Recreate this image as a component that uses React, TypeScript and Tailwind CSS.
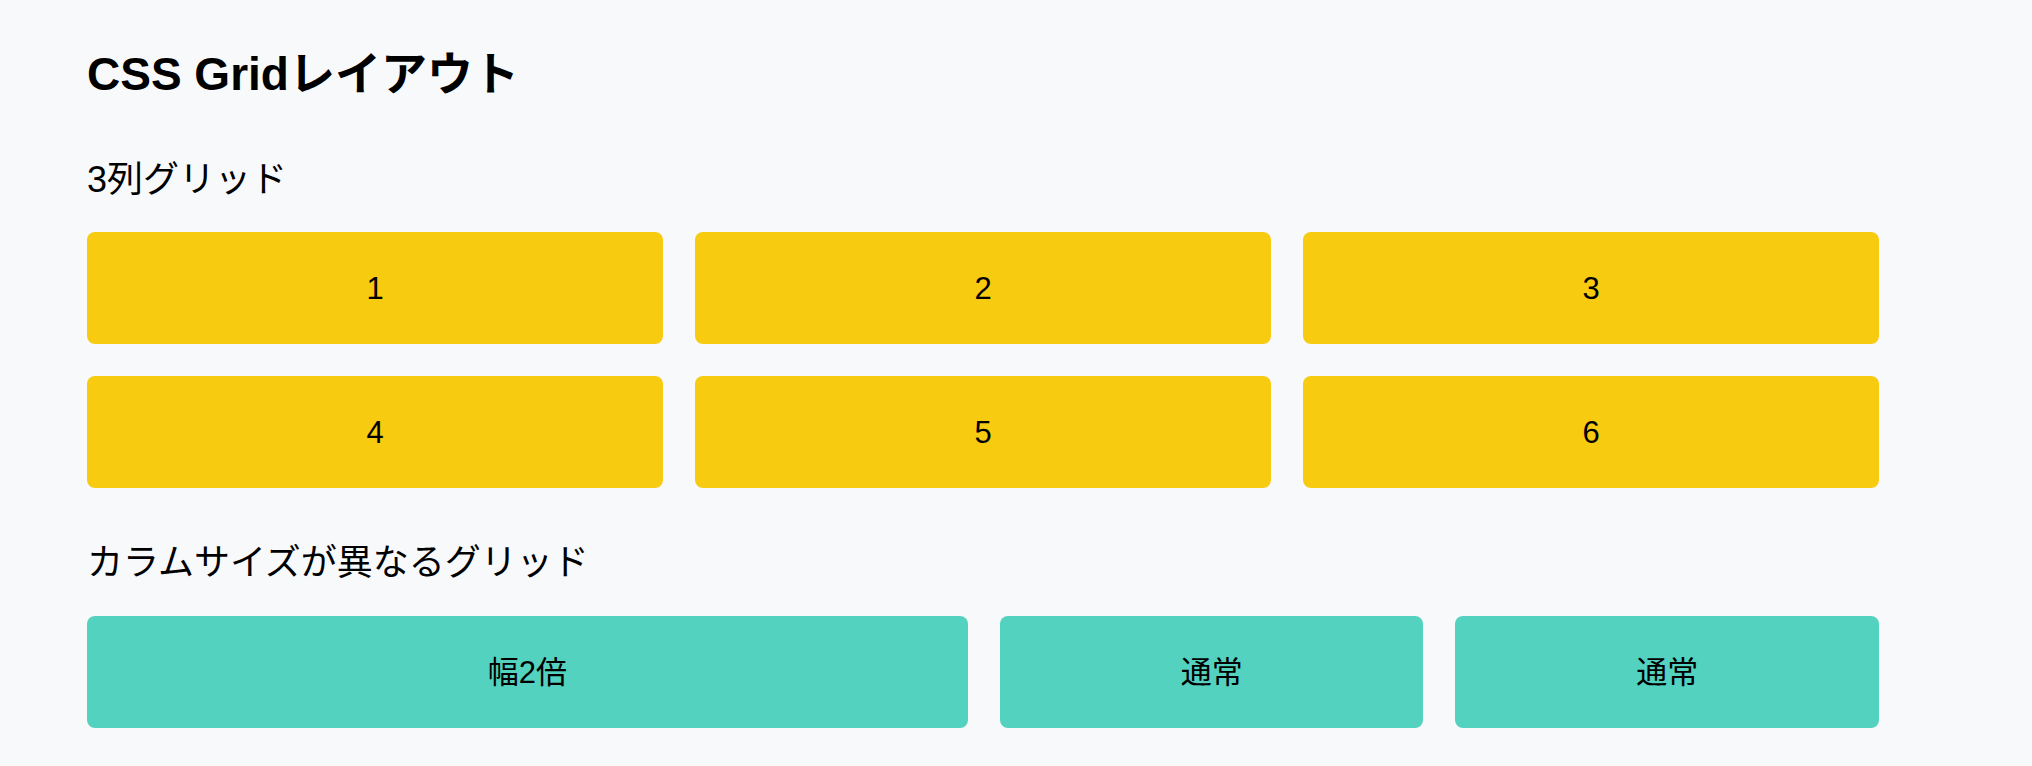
const cells = ['1', '2', '3', '4', '5', '6']

const font = 'font-["Liberation_Sans","Noto_Sans_CJK_JP",sans-serif]'

function Cell({ label, color }: { label: string; color: string }) {
  return (
    <div className={`flex h-[112px] items-center justify-center rounded-lg text-[31px] leading-none text-black ${color}`}>
      {label}
    </div>
  )
}

export default function App() {
  return (
    <div className={`min-h-screen bg-[#f8f9fb] px-[87px] pt-[51px] pb-[38px] text-black ${font}`}>
      <h1 className="text-[46px] font-bold leading-none">CSS Gridレイアウト</h1>

      <h2 className="mt-[65px] text-[36px] leading-none">3列グリッド</h2>
      <div className="mt-[34px] grid w-[1792px] grid-cols-3 gap-8">
        {cells.map((c) => (
          <Cell key={c} label={c} color="bg-[#f6cb10]" />
        ))}
      </div>

      <h2 className="mt-[57px] text-[36px] leading-none">カラムサイズが異なるグリッド</h2>
      <div className="mt-[35px] grid w-[1792px] grid-cols-[2.08fr_1fr_1fr] gap-8">
        <Cell label="幅2倍" color="bg-[#52d2bf]" />
        <Cell label="通常" color="bg-[#52d2bf]" />
        <Cell label="通常" color="bg-[#52d2bf]" />
      </div>
    </div>
  )
}
